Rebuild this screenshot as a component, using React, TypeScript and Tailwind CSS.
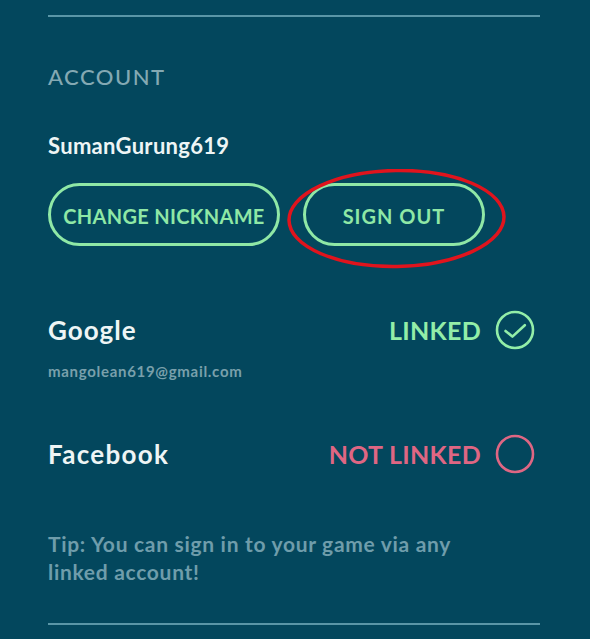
import type { ReactNode } from 'react';

const FONT = 'font-["Lato","Liberation_Sans",sans-serif]';

function Divider() {
  return <div className="h-[2px] w-full bg-[#5a96a7]" />;
}

function PillButton({ width, children }: { width: string; children: ReactNode }) {
  return (
    <div
      className={`${width} flex h-[63px] items-center justify-center rounded-full border-[3px] border-[#8fe8a6] pt-[2px] text-[20px] leading-none font-bold tracking-[0.3px] text-[#8fe8a6]`}
    >
      {children}
    </div>
  );
}

function LinkedIcon() {
  return (
    <svg width="40" height="40" viewBox="0 0 40 40" fill="none">
      <circle cx="20" cy="20" r="18" stroke="#93eea8" strokeWidth="2.6" />
      <path
        d="M10.5 21 L17.4 26.6 L29.8 15.2"
        stroke="#93eea8"
        strokeWidth="2.6"
        strokeLinecap="round"
        strokeLinejoin="round"
      />
    </svg>
  );
}

function NotLinkedIcon() {
  return (
    <svg width="40" height="40" viewBox="0 0 40 40" fill="none">
      <circle cx="20" cy="20" r="18" stroke="#df6683" strokeWidth="2.6" />
    </svg>
  );
}

export default function App() {
  return (
    <div className={`${FONT} min-h-screen w-[590px] bg-[#03475d] pt-[15px] pr-[50px] pl-[48px]`}>
      <Divider />

      {/* アカウント */}
      <div className="mt-[49px] text-[22px] leading-none font-medium tracking-[1.5px] text-[#84a9b3]">
        ACCOUNT
      </div>

      <div className="mt-[47px] text-[22px] leading-none font-bold tracking-[0.3px] text-[#eef5f5]">
        SumanGurung619
      </div>

      <div className="mt-[26px] flex gap-[23px]">
        <PillButton width="w-[232px]">CHANGE NICKNAME</PillButton>
        <div className="relative">
          <PillButton width="w-[182px]">
            <span className="tracking-[1px]">SIGN OUT</span>
          </PillButton>
          {/* 赤丸の注釈 */}
          <svg
            className="pointer-events-none absolute top-[-14px] left-[-16px]"
            width="220"
            height="100"
            viewBox="0 0 220 100"
            fill="none"
          >
            <ellipse
              cx="109.5"
              cy="49.5"
              rx="107.5"
              ry="48"
              stroke="#e0141d"
              strokeWidth="3.5"
              transform="rotate(-1 109.5 49.5)"
            />
          </svg>
        </div>
      </div>

      {/* Google */}
      <div className="mt-[64px] mr-[5px] flex h-[40px] items-center justify-between">
        <div className="text-[26px] leading-none font-bold tracking-[1px] text-[#eef5f5]">
          Google
        </div>
        <div className="flex items-center gap-[14px]">
          <span className="text-[25px] leading-none font-bold tracking-[0.3px] text-[#93eea8]">
            LINKED
          </span>
          <LinkedIcon />
        </div>
      </div>
      <div className="mt-[14px] text-[15px] leading-none font-bold tracking-[0.7px] text-[#79a0ab]">
        mangolean619@gmail.com
      </div>

      {/* Facebook */}
      <div className="mt-[55px] mr-[5px] flex h-[40px] items-center justify-between">
        <div className="text-[26px] leading-none font-bold tracking-[1.3px] text-[#eef5f5]">
          Facebook
        </div>
        <div className="flex items-center gap-[14px]">
          <span className="text-[25px] leading-none font-bold tracking-[0.3px] text-[#df6683]">
            NOT LINKED
          </span>
          <NotLinkedIcon />
        </div>
      </div>

      <p className="mt-[56px] max-w-[430px] text-[21px] leading-[27.5px] font-bold tracking-[0.7px] text-[#6f9dab]">
        Tip: You can sign in to your game via any linked account!
      </p>

      <div className="mt-[38px]">
        <Divider />
      </div>
    </div>
  );
}
